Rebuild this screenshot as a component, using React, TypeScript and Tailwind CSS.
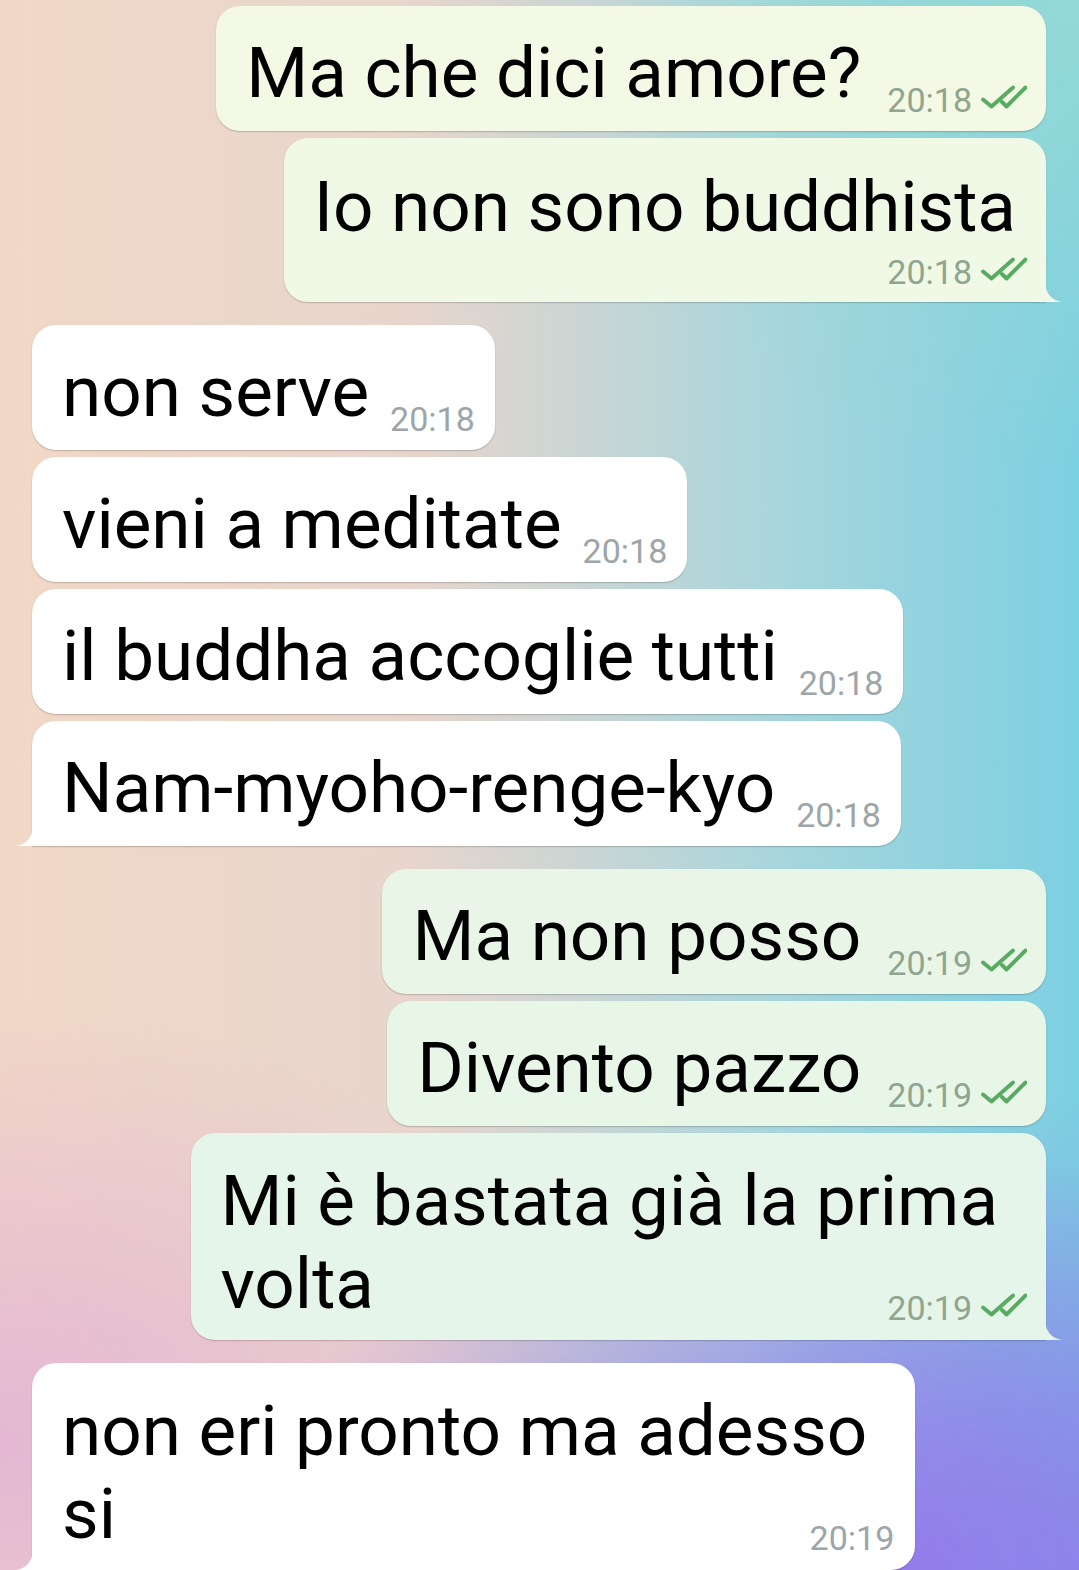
import React from 'react';

type Layout = 'inline' | 'below' | 'wrap';

interface Message {
  lines: string[];
  time: string;
  out: boolean;
  layout: Layout;
  bg: string;
  fill: string;
  tail?: boolean;
  first?: boolean;
}

const messages: Message[] = [
  { lines: ['Ma che dici amore?'], time: '20:18', out: true, layout: 'inline', bg: 'bg-[#f4f9e5]', fill: '#f4f9e5' },
  { lines: ['Io non sono buddhista'], time: '20:18', out: true, layout: 'below', bg: 'bg-[#f0f8e6]', fill: '#f0f8e6', tail: true },
  { lines: ['non serve'], time: '20:18', out: false, layout: 'inline', bg: 'bg-white', fill: '#ffffff', first: true },
  { lines: ['vieni a meditate'], time: '20:18', out: false, layout: 'inline', bg: 'bg-white', fill: '#ffffff' },
  { lines: ['il buddha accoglie tutti'], time: '20:18', out: false, layout: 'inline', bg: 'bg-white', fill: '#ffffff' },
  { lines: ['Nam-myoho-renge-kyo'], time: '20:18', out: false, layout: 'inline', bg: 'bg-white', fill: '#ffffff', tail: true },
  { lines: ['Ma non posso'], time: '20:19', out: true, layout: 'inline', bg: 'bg-[#e9f6e7]', fill: '#e9f6e7', first: true },
  { lines: ['Divento pazzo'], time: '20:19', out: true, layout: 'inline', bg: 'bg-[#e8f6e8]', fill: '#e8f6e8' },
  { lines: ['Mi è bastata già la prima', 'volta'], time: '20:19', out: true, layout: 'wrap', bg: 'bg-[#e6f5e9]', fill: '#e6f5e9', tail: true },
  { lines: ['non eri pronto ma adesso', 'si'], time: '20:19', out: false, layout: 'wrap', bg: 'bg-white', fill: '#ffffff', tail: true, first: true },
];

const DoubleCheck = () => (
  <svg width="47" height="25" viewBox="0 0 47 25" fill="none" className="ml-[8px] mb-[10px] shrink-0">
    <path d="M3 14.5 L11.5 21.5 L33 2.5" stroke="#5aab62" strokeWidth="3.9" strokeLinecap="round" strokeLinejoin="round" />
    <path d="M22 17 L26.5 21.5 L45.5 2.5" stroke="#5aab62" strokeWidth="3.9" strokeLinecap="round" strokeLinejoin="round" />
  </svg>
);

const Meta = ({ m, className }: { m: Message; className?: string }) => (
  <div className={`flex items-end shrink-0 ${className ?? ''}`}>
    <span className={m.out ? 'text-[34px] leading-[40px] text-[#8fa58e]' : 'text-[34px] leading-[40px] text-[#9ca6a8]'}>
      {m.time}
    </span>
    {m.out ? <DoubleCheck /> : null}
  </div>
);

const Tail = ({ m }: { m: Message }) =>
  m.out ? (
    <svg width="17" height="22" viewBox="0 0 17 22" className="absolute bottom-0 -right-[16px]">
      <path d="M0 0 Q0 19 17 22 L0 22 Z" fill={m.fill} />
    </svg>
  ) : (
    <svg width="17" height="22" viewBox="0 0 17 22" className="absolute bottom-0 -left-[16px]">
      <path d="M17 0 Q17 19 0 22 L17 22 Z" fill={m.fill} />
    </svg>
  );

const Bubble = ({ m }: { m: Message }) => {
  const side = m.out ? 'self-end' : 'self-start';
  const corner = m.tail
    ? m.out
      ? 'rounded-[24px] rounded-br-none'
      : 'rounded-[24px] rounded-bl-none'
    : 'rounded-[24px]';
  const text = 'text-[71px] leading-[83px] text-black whitespace-nowrap';

  return (
    <div
      className={`relative ${side} ${corner} ${m.bg} ${m.first ? 'mt-[16px]' : ''} shadow-[0_1px_1.5px_rgba(0,0,0,0.2)]`}
    >
      {m.layout === 'inline' && (
        <div className={`flex items-end pl-[30px] pt-[25px] pb-[17px] ${m.out ? 'pr-[19px]' : 'pr-[20px]'}`}>
          <span className={text}>{m.lines[0]}</span>
          <Meta m={m} className={m.out ? 'ml-[26px] -mb-[6px]' : 'ml-[21px] -mb-[6px]'} />
        </div>
      )}
      {m.layout === 'below' && (
        <div className="flex flex-col pl-[30px] pr-[30px] pt-[27px] pb-[10px]">
          <span className={text}>{m.lines[0]}</span>
          <Meta m={m} className="self-end mt-[4px] -mr-[11px]" />
        </div>
      )}
      {m.layout === 'wrap' && (
        <div className={`flex flex-col pl-[30px] pt-[26px] pb-[12px] ${m.out ? 'pr-[19px]' : 'pr-[21px]'}`}>
          <div className={`${text} ${m.out ? 'mr-[29px]' : 'mr-[27px]'}`}>
            {m.lines.map((l, i) => (
              <div key={i}>{l}</div>
            ))}
          </div>
          <Meta m={m} className="self-end -mt-[37px]" />
        </div>
      )}
      {m.tail ? <Tail m={m} /> : null}
    </div>
  );
};

export default function App() {
  return (
    <div className="h-[1570px] w-full overflow-hidden font-[Roboto,sans-serif] bg-[image:radial-gradient(ellipse_55%_28%_at_78%_100%,rgba(150,114,236,0.95),rgba(150,114,236,0)),radial-gradient(ellipse_35%_30%_at_100%_100%,rgba(128,150,232,0.9),rgba(128,150,232,0)),radial-gradient(ellipse_55%_28%_at_0%_92%,rgba(226,176,214,0.85),rgba(226,176,214,0)),radial-gradient(ellipse_45%_30%_at_100%_0%,rgba(150,218,212,0.9),rgba(150,218,212,0)),linear-gradient(to_right,#f1d8c6_0%,#e8d5cd_38%,#a8d6dc_72%,#7ccfe1_100%)]">
      <div className="flex flex-col gap-[7px] pl-[32px] pr-[33px] pt-[6px]">
        {messages.map((m, i) => (
          <Bubble key={i} m={m} />
        ))}
      </div>
    </div>
  );
}
